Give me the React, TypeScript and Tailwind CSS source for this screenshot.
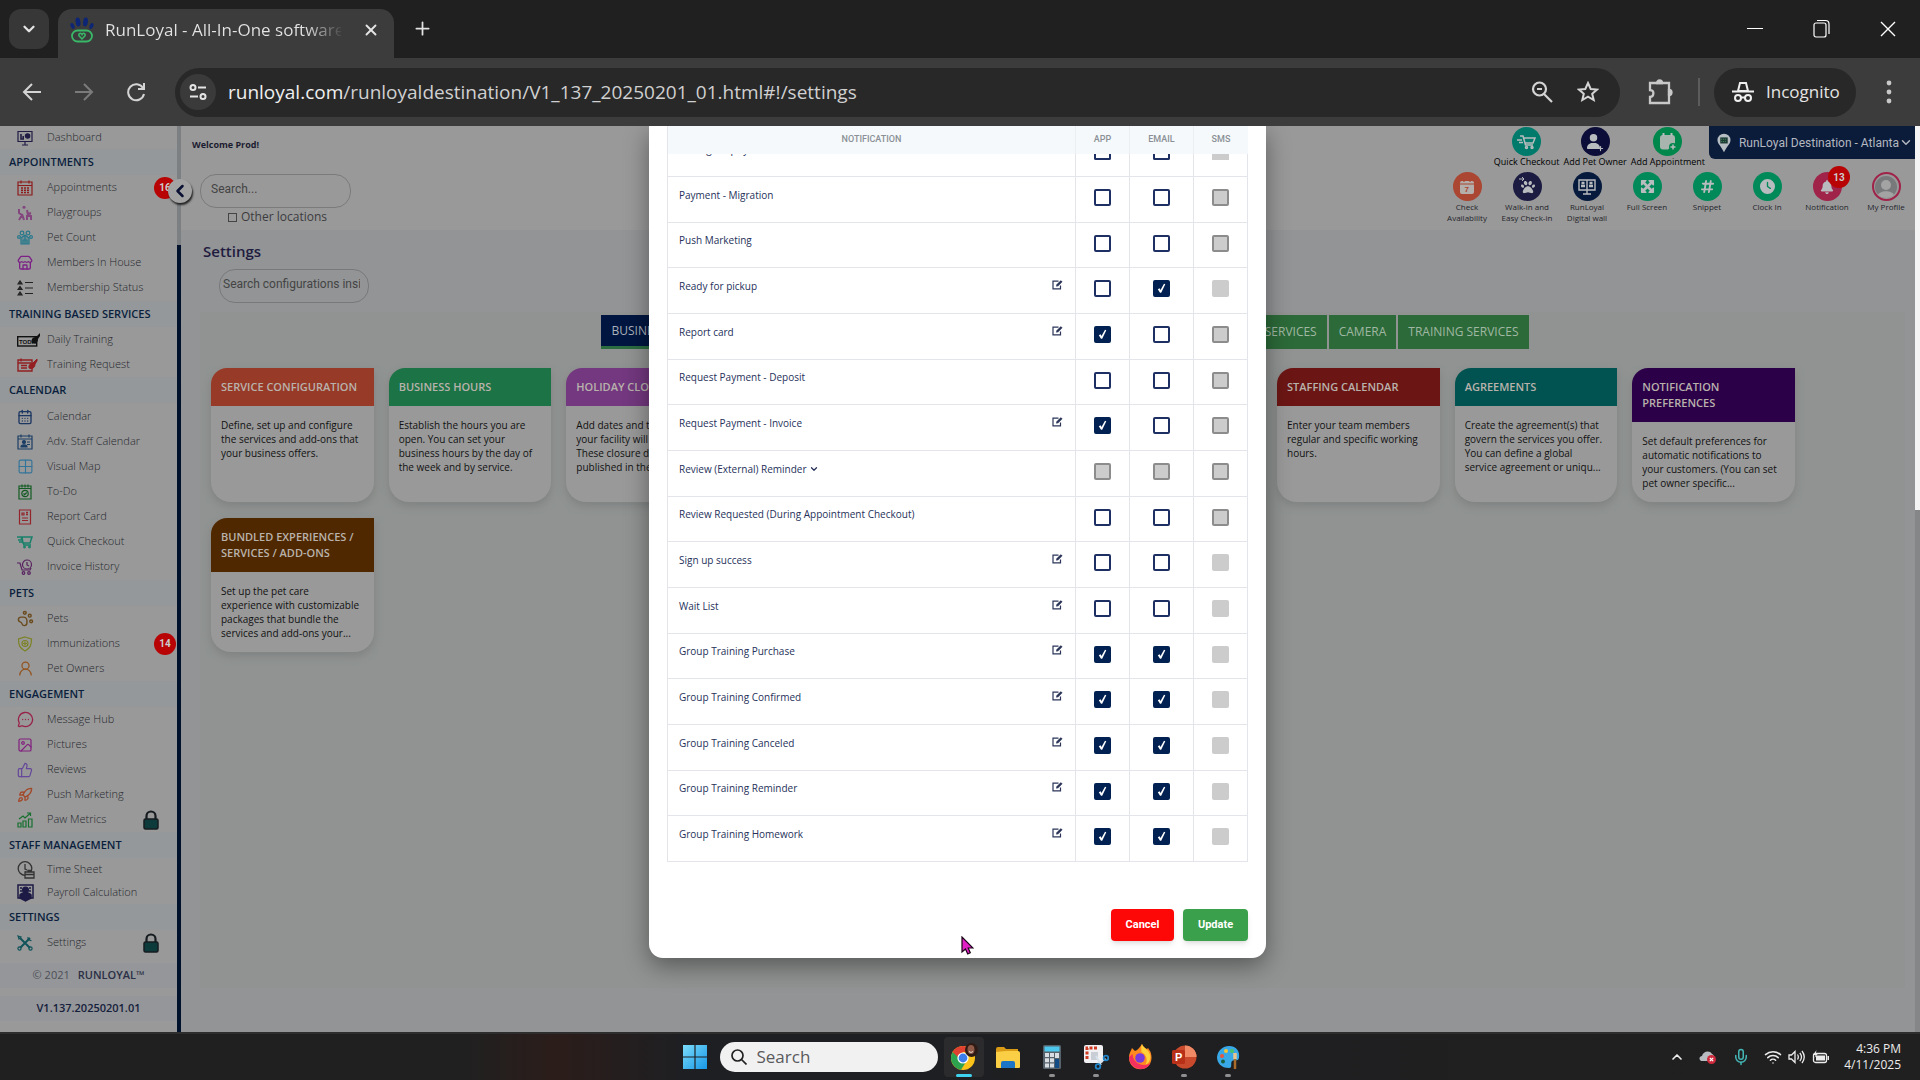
import { useState, type ReactNode } from 'react'
import {
  CalendarDays,
  ChevronDown,
  ChevronLeft,
  ChevronUp,
  Grid2X2,
  Image,
  MessageCircleMore,
  Mic,
  PawPrint,
  Plus,
  Rocket,
  Store,
  ThumbsUp,
  UserRound,
  Wifi,
  X,
} from 'lucide-react'
import { FaBell, FaClock, FaHashtag, FaMaximize, FaPaw, FaUser } from 'react-icons/fa6'

const base = { width: 16, height: 16, viewBox: '0 0 16 16', fill: 'none', stroke: 'currentColor', strokeWidth: 1.2 }

const icons: Record<string, ReactNode> = {
  dashboard: (
    <svg {...base} className="text-[#211d45]">
      <path d="M1 1.5h14v10H1zM5 15h6M8 12v3" />
      <path d="M4 4v5h3M6.2 6v3" strokeWidth="1.6" />
      <circle cx="10.6" cy="6" r="2.2" fill="currentColor" />
    </svg>
  ),
  appointments: (
    <svg {...base} className="text-[#8e1b1b]">
      <path d="M1 2h14v13H1zM1 5.5h14M4 .5v3M12 .5v3" />
      <path d="M4 8h8M4 10.2h8M4 12.4h8" strokeWidth="1.5" strokeDasharray="2 1" />
    </svg>
  ),
  playgroups: (
    <svg {...base} className="text-[#83467f]">
      <circle cx="7" cy="2.2" r="1.5" fill="currentColor" stroke="none" />
      <path d="M2 4v4l3 2-3 5M5 9l2 6M10 5l1 5 3 1v4M10 10v5M11 9l3-1" strokeWidth="2" />
    </svg>
  ),
  petCount: (
    <svg {...base} className="text-[#26798c]">
      <circle cx="5" cy="3" r="1.8" />
      <circle cx="11" cy="3" r="1.8" />
      <circle cx="2" cy="7" r="1.4" />
      <circle cx="14" cy="7" r="1.4" />
      <path d="M4 8l4-3 4 3v6H4zM6 14v-4h4v4M8 6v8" fill="#26798c55" />
    </svg>
  ),
  members: <Store size={16} strokeWidth={2} className="text-[#7d2187]" />,
  membership: (
    <svg {...base} className="text-[#222]">
      <path d="M8 2.5h8M8 8h8M8 13.5h8" />
      <path d="M1 4l2-3 2 3zM1 9.5l2-3 2 3zM1 15l2-3 2 3z" fill="#333" />
    </svg>
  ),
  daily: (
    <svg width="24" height="14" viewBox="0 0 24 14">
      <rect x=".7" y="3.7" width="19" height="9.3" fill="none" stroke="#111" strokeWidth="1.4" />
      <text x="2" y="11" fontSize="6" fontWeight="700" fontFamily="Liberation Sans" fill="#111">TODA</text>
      <path d="M15 10a4 4 0 0 1 4-6l4-4v3l-2 3a4 4 0 0 1-6 4z" fill="#111" />
    </svg>
  ),
  request: (
    <svg width="22" height="14" viewBox="0 0 22 14" fill="none" stroke="#931f22">
      <path d="M1 2h14v11H1zM1 5h13M4 .5v3M4 7.5h6M4 10h6" strokeWidth="1.4" />
      <path d="M12 10a4 4 0 0 1 4-5l4-4v2l-2 3a4 4 0 0 1-6 4z" fill="#931f22" />
    </svg>
  ),
  calendar: <CalendarDays size={16} strokeWidth={2} className="text-[#1c3761]" />,
  staffCalendar: (
    <svg {...base} className="text-[#1b3f66]">
      <path d="M1 2h14v13H1zM1 5h14M4 .5v3M12 .5v3" />
      <circle cx="7" cy="8" r="1.5" fill="currentColor" />
      <path d="M4 13c0-3 6-3 6 0zM10 8h3M10 10.5h3" fill="currentColor" />
    </svg>
  ),
  map: <Grid2X2 size={17} strokeWidth={1.6} className="text-[#33749a]" />,
  todo: (
    <svg {...base} className="text-[#135c24]">
      <path d="M2 2h12v13H2zM2 4.5h12M5 .5v3M8 .5v3M11 .5v3" />
      <circle cx="8" cy="9.5" r="3.2" />
      <path d="M6.5 9.5l1.2 1.2 2-2.2" />
    </svg>
  ),
  report: (
    <svg {...base} className="text-[#94252c]">
      <path d="M2.5 1h11v14h-11zM5 9h6M5 11.5h6M5 4h2v2H5z" />
      <path d="M9 3.5h2M9 5.5h2" strokeWidth="1.6" />
    </svg>
  ),
  cart: (
    <svg {...base} className="text-[#188069]">
      <path d="M5 3h10l-2 6H6zM0 3h4l3 8h7M1 6h4M2 8h4" strokeWidth="1.5" />
      <circle cx="7.5" cy="13" r=".8" />
      <circle cx="12.5" cy="13" r=".8" />
    </svg>
  ),
  invoice: (
    <svg {...base} className="text-[#58215f]">
      <circle cx="10" cy="5.5" r="4.5" />
      <path d="M10 3v3l2 1M0 4h3l2 7h8l1-2" />
      <circle cx="6.5" cy="14" r="1.3" />
      <circle cx="12" cy="14" r="1.3" />
    </svg>
  ),
  pets: <PawPrint size={17} strokeWidth={2} className="text-[#6b4a1d]" />,
  shield: (
    <svg {...base} className="text-[#7d8325]">
      <path d="M8 1l6.500 2c0 6-1 9-6.500 12C2.500 12 1.500 9 1.500 3z" />
      <circle cx="8" cy="7.5" r="3" />
      <path d="M8 5.5v4M6 7.5h4" />
    </svg>
  ),
  owners: <UserRound size={17} strokeWidth={1.8} className="text-[#93541f]" />,
  message: <MessageCircleMore size={17} strokeWidth={1.8} className="text-[#98234a]" />,
  pictures: <Image size={16} strokeWidth={1.8} className="text-[#83217f]" />,
  reviews: <ThumbsUp size={16} strokeWidth={1.8} className="text-[#66479b]" />,
  rocket: <Rocket size={16} strokeWidth={2} className="text-[#a3492a]" />,
  metrics: (
    <svg {...base} className="text-[#16702f]">
      <path d="M1 11h3v4H1zM6 9h3v6H6zM11.5 7H15v8h-3.5zM2 7l4-3 2 2 5-4.5M10 1h3.5v3" />
    </svg>
  ),
  time: (
    <svg width="18" height="18" viewBox="0 0 18 18" fill="none" stroke="#333" strokeWidth="1.3">
      <circle cx="8" cy="7.5" r="6.8" />
      <path d="M8 3v5l2 1M8 11H9" />
      <path d="M8 11h9v6H8zM11 11V9.5h3V11M8 13.5h9" fill="#999" />
    </svg>
  ),
  payroll: (
    <svg width="17" height="18" viewBox="0 0 17 18" fill="none" stroke="#1d1a45" strokeWidth="1.5">
      <path d="M1 1h15v13H1zM3 4h2M12 4h2M3 7h2M12 7h2" />
      <circle cx="8.5" cy="6" r="2.8" fill="#1d1a45" />
      <path d="M3 11c2-3 9-3 11 0v3l-5.5 3L3 14z" fill="#1d1a45" />
    </svg>
  ),
  tools: (
    <svg {...base} className="text-[#11545a]">
      <path d="M3 3l10 10M13 3L3 13" strokeWidth="2" />
      <circle cx="2.5" cy="13.5" r="1.6" />
      <circle cx="13.5" cy="13.5" r="1.6" />
      <path d="M1 1l3 1-2 2zM11 2a3 3 0 0 0 3.5 3.5" />
    </svg>
  ),
}

type Item = { label: string; icon: string; badge?: string; locked?: boolean }
type Section = { title: string; items: Item[]; listClass?: string; compact?: boolean }

const sections: Section[] = [
  {
    title: 'APPOINTMENTS',
    listClass: 'pb-px',
    items: [
      { label: 'Appointments', icon: 'appointments', badge: '16' },
      { label: 'Playgroups', icon: 'playgroups' },
      { label: 'Pet Count', icon: 'petCount' },
      { label: 'Members In House', icon: 'members' },
      { label: 'Membership Status', icon: 'membership' },
    ],
  },
  {
    title: 'TRAINING BASED SERVICES',
    items: [
      { label: 'Daily Training', icon: 'daily' },
      { label: 'Training Request', icon: 'request' },
    ],
  },
  {
    title: 'CALENDAR',
    listClass: 'py-px',
    items: [
      { label: 'Calendar', icon: 'calendar' },
      { label: 'Adv. Staff Calendar', icon: 'staffCalendar' },
      { label: 'Visual Map', icon: 'map' },
      { label: 'To-Do', icon: 'todo' },
      { label: 'Report Card', icon: 'report' },
      { label: 'Quick Checkout', icon: 'cart' },
      { label: 'Invoice History', icon: 'invoice' },
    ],
  },
  {
    title: 'PETS',
    items: [
      { label: 'Pets', icon: 'pets' },
      { label: 'Immunizations', icon: 'shield', badge: '14' },
      { label: 'Pet Owners', icon: 'owners' },
    ],
  },
  {
    title: 'ENGAGEMENT',
    items: [
      { label: 'Message Hub', icon: 'message' },
      { label: 'Pictures', icon: 'pictures' },
      { label: 'Reviews', icon: 'reviews' },
      { label: 'Push Marketing', icon: 'rocket' },
      { label: 'Paw Metrics', icon: 'metrics', locked: true },
    ],
  },
  {
    title: 'STAFF MANAGEMENT',
    compact: true,
    items: [
      { label: 'Time Sheet', icon: 'time' },
      { label: 'Payroll Calculation', icon: 'payroll' },
    ],
  },
  { title: 'SETTINGS', items: [{ label: 'Settings', icon: 'tools', locked: true }] },
]

// on = ticked, off = empty, dim = disabled with border, flat = disabled without border
type Box = 'on' | 'off' | 'dim' | 'flat'
type Row = { label: string; edit?: boolean; expand?: boolean; boxes: [Box, Box, Box] }

const rows: Row[] = [
  { label: 'Payment - Migration', boxes: ['off', 'off', 'dim'] },
  { label: 'Push Marketing', boxes: ['off', 'off', 'dim'] },
  { label: 'Ready for pickup', edit: true, boxes: ['off', 'on', 'flat'] },
  { label: 'Report card', edit: true, boxes: ['on', 'off', 'dim'] },
  { label: 'Request Payment - Deposit', boxes: ['off', 'off', 'dim'] },
  { label: 'Request Payment - Invoice', edit: true, boxes: ['on', 'off', 'dim'] },
  { label: 'Review (External) Reminder', expand: true, boxes: ['dim', 'dim', 'dim'] },
  { label: 'Review Requested (During Appointment Checkout)', boxes: ['off', 'off', 'dim'] },
  { label: 'Sign up success', edit: true, boxes: ['off', 'off', 'flat'] },
  { label: 'Wait List', edit: true, boxes: ['off', 'off', 'flat'] },
  { label: 'Group Training Purchase', edit: true, boxes: ['on', 'on', 'flat'] },
  { label: 'Group Training Confirmed', edit: true, boxes: ['on', 'on', 'flat'] },
  { label: 'Group Training Canceled', edit: true, boxes: ['on', 'on', 'flat'] },
  { label: 'Group Training Reminder', edit: true, boxes: ['on', 'on', 'flat'] },
  { label: 'Group Training Homework', edit: true, boxes: ['on', 'on', 'flat'] },
]

const channels = ['APP', 'EMAIL', 'SMS']

const cards = [
  {
    title: 'SERVICE CONFIGURATION',
    color: 'bg-[#973a28]',
    text: 'Define, set up and configure\nthe services and add-ons that\nyour business offers.',
  },
  {
    title: 'BUSINESS HOURS',
    color: 'bg-[#1c7345]',
    text: 'Establish the hours you are\nopen. You can set your\nbusiness hours by the day of\nthe week and by service.',
  },
  {
    title: 'HOLIDAY CLOSURES',
    color: 'bg-[#73387f]',
    text: 'Add dates and times that\nyour facility will be closed.\nThese closure dates will be\npublished in the app.',
  },
  {
    title: 'STAFFING CALENDAR',
    color: 'bg-[#6b1614]',
    position: 'col-start-7',
    text: 'Enter your team members\nregular and specific working\nhours.',
  },
  {
    title: 'AGREEMENTS',
    color: 'bg-[#005350]',
    text: 'Create the agreement(s) that\ngovern the services you offer.\nYou can define a global\nservice agreement or uniqu...',
  },
  {
    title: 'NOTIFICATION PREFERENCES',
    color: 'bg-[#2b0048]',
    text: 'Set default preferences for\nautomatic notifications to\nyour customers. (You can set\npet owner specific...',
  },
  {
    title: 'BUNDLED EXPERIENCES / SERVICES / ADD-ONS',
    color: 'bg-[#4f2800]',
    text: 'Set up the pet care\nexperience with customizable\npackages that bundle the\nservices and add-ons your...',
  },
]

function BrowserBar() {
  return (
    <header className="font-['Open_Sans',sans-serif] text-[#e4e4e4]">
      <div className="flex h-[58px] items-end bg-[#1f201f] pl-[9px]">
        <button aria-label="Search tabs" className="mb-[9px] flex size-10 items-center justify-center rounded-xl bg-[#373737]">
          <ChevronDown size={18} strokeWidth={3} />
        </button>
        <div className="ml-[9px] flex h-[49px] w-[336px] items-center rounded-t-[14px] bg-[#3c3c3c] pr-3.5 pb-2 pl-3">
          <svg width="24" height="26" viewBox="0 0 24 26" fill="none">
            <g fill="#0d2575">
              <ellipse cx="2.5" cy="9" rx="1.8" ry="3" transform="rotate(-25 2.5 9)" />
              <ellipse cx="8" cy="5" rx="2.4" ry="4.5" transform="rotate(-8 8 5)" />
              <ellipse cx="15.5" cy="5" rx="2.4" ry="4.5" transform="rotate(8 15.5 5)" />
              <ellipse cx="21.5" cy="9" rx="1.8" ry="3" transform="rotate(25 21.5 9)" />
            </g>
            <rect x="2" y="13.5" width="20" height="11" rx="5.5" stroke="#39b868" strokeWidth="1.8" />
            <path d="M12 22l-3-3.300c-1-2 2-3.500 3-1.200 1-2.300 4-.8 3 1.200z" stroke="#39b868" strokeWidth="1.5" />
          </svg>
          <span className="ml-[11px] w-[236px] overflow-hidden bg-gradient-to-r from-[#e4e4e4] from-85% to-[#4a4a4a] bg-clip-text text-[17px] whitespace-nowrap text-transparent">
            RunLoyal - All-In-One software
          </span>
          <button aria-label="Close tab" className="ml-auto">
            <X size={18} strokeWidth={2.5} />
          </button>
        </div>
        <button aria-label="New tab" className="mb-[19px] ml-[18px]">
          <Plus size={21} strokeWidth={2} />
        </button>
        <div className="mb-[19px] ml-auto flex items-center gap-[50px] pr-6 text-white">
          <button aria-label="Minimize">
            <svg width="16" height="16" viewBox="0 0 16 16" stroke="currentColor"><path d="M0 7.5h16" /></svg>
          </button>
          <button aria-label="Restore">
            <svg width="17" height="20" viewBox="0 0 17 20" fill="none" stroke="currentColor" strokeWidth="1.2">
              <rect x="1" y="4" width="12" height="14" rx="2" />
              <path d="M4 1.5h8.500c2 0 3.500 1.500 3.500 3.500v10" />
            </svg>
          </button>
          <button aria-label="Close">
            <svg width="16" height="18" viewBox="0 0 16 18" stroke="currentColor" strokeWidth="1.4"><path d="M1 2l14 14M15 2L1 16" /></svg>
          </button>
        </div>
      </div>
      <div className="flex h-[68px] items-center bg-[#3c3c3c] pr-[27px] pl-[22px]">
        <div className="flex w-[153px] gap-8">
          <button aria-label="Back">
            <svg width="20" height="20" viewBox="0 0 20 20" fill="none" stroke="#d4d4d4" strokeWidth="2"><path d="M19 10H2M10 2l-8 8 8 8" /></svg>
          </button>
          <button aria-label="Forward">
            <svg width="20" height="20" viewBox="0 0 20 20" fill="none" stroke="#7b7b7b" strokeWidth="2"><path d="M1 10h17M10 2l8 8-8 8" /></svg>
          </button>
          <button aria-label="Reload">
            <svg width="20" height="20" viewBox="0 0 20 20" fill="none" stroke="#d4d4d4" strokeWidth="2"><path d="M18 12a8 8 0 1 1-1-6M18 1v6h-6" /></svg>
          </button>
        </div>
        <div className="flex h-[49px] flex-1 items-center rounded-full bg-[#282828] pr-[21px] pl-[5px]">
          <button aria-label="Site information" className="flex size-9 items-center justify-center rounded-full bg-[#3a3a3a]">
            <svg width="18" height="18" viewBox="0 0 18 18" fill="none" stroke="#e4e4e4" strokeWidth="2">
              <circle cx="4" cy="4.5" r="2.5" />
              <circle cx="14" cy="13.5" r="2.5" />
              <path d="M9 4.5h8M1 13.5h8" />
            </svg>
          </button>
          <span className="ml-3 flex-1 text-[19px] text-[#d0d0d0]">
            <span className="text-[#efefef]">runloyal.com</span>/runloyaldestination/V1_137_20250201_01.html#!/settings
          </span>
          <button aria-label="Zoom" className="mr-6">
            <svg width="22" height="22" viewBox="0 0 22 22" fill="none" stroke="#d4d4d4" strokeWidth="2.2">
              <circle cx="8.5" cy="8" r="6.5" />
              <path d="M13 13l8 8M6 8h5" />
            </svg>
          </button>
          <button aria-label="Bookmark">
            <svg width="22" height="22" viewBox="0 0 22 22" fill="none" stroke="#d4d4d4" strokeWidth="2">
              <path d="M11 2l2.700 6 6.300.6-4.800 4.200L16.700 19 11 15.700 5.300 19l1.500-6.200L2 8.600 8.300 8z" />
            </svg>
          </button>
        </div>
        <button aria-label="Extensions" className="ml-[27px]">
          <svg width="26" height="26" viewBox="0 0 26 26" fill="none" stroke="#c8c8c8" strokeWidth="2.3">
            <path d="M3 4h19v20H3v-6c4 0 5-7 0-7z" />
            <path d="M10 4a2.500 2.500 0 0 1 5 0zM22 11a2.500 2.500 0 0 1 0 5z" fill="#c8c8c8" />
          </svg>
        </button>
        <div className="mr-3.5 ml-[25px] h-7 w-0.5 bg-[#5c5c5c]" />
        <button className="flex h-[49px] w-[142px] items-center gap-3 rounded-full bg-[#282828] pl-[18px] text-[17px]">
          <svg width="22" height="22" viewBox="0 0 22 22" fill="none" stroke="#efefef" strokeWidth="2">
            <path d="M6 10l2-8h6l2 8zM0 10.5h22" />
            <circle cx="6" cy="17" r="3" />
            <circle cx="16" cy="17" r="3" />
            <path d="M9 16.5h4" />
          </svg>
          Incognito
        </button>
        <button aria-label="Menu" className="ml-[29px]">
          <svg width="8" height="26" viewBox="0 0 8 26" fill="#c8c8c8">
            <circle cx="4" cy="4" r="2.4" />
            <circle cx="4" cy="13" r="2.4" />
            <circle cx="4" cy="22" r="2.4" />
          </svg>
        </button>
      </div>
    </header>
  )
}

function Sidebar() {
  return (
    <>
      <nav className="w-[177px] shrink-0 bg-[#999]">
        <a href="#dashboard" className="flex h-[23px] items-center text-[11px] font-light text-[#26282e]">
          <span className="ml-[17px] flex w-[30px]">{icons.dashboard}</span>
          Dashboard
        </a>
        {sections.map((section) => (
          <div key={section.title}>
            <h2 className="flex h-[26px] items-center bg-[#94989b] pl-[9px] text-[11px] font-semibold text-[#0b1f3d]">{section.title}</h2>
            <div className={section.listClass}>
              {section.items.map((item) => (
                <a
                  key={item.label}
                  href="#settings"
                  className={`relative flex items-center text-[11px] font-light whitespace-nowrap text-[#26282e] ${section.compact ? 'h-[23px]' : 'h-[25px]'}`}
                >
                  <span className="ml-[17px] flex w-[30px] shrink-0">{icons[item.icon]}</span>
                  {item.label}
                  {item.badge && (
                    <span className="absolute right-px flex size-[22px] items-center justify-center rounded-full bg-[#b80404] font-['Roboto',sans-serif] text-[10px] font-bold text-[#ccc]">
                      {item.badge}
                    </span>
                  )}
                  {item.locked && (
                    <span className="absolute right-[18px]">
                      <svg width="16" height="20" viewBox="0 0 16 20">
                        <path d="M3.500 10V6a4.500 4.500 0 0 1 9 0v4" fill="none" stroke="#161c20" strokeWidth="2.2" />
                        <rect x="1" y="9" width="14" height="10" rx="1.5" fill="#0d3b3c" stroke="#161c20" strokeWidth="1.5" />
                      </svg>
                    </span>
                  )}
                </a>
              ))}
            </div>
          </div>
        ))}
        <p className="mt-2 flex h-[25px] items-center justify-center gap-2 bg-[#949699] text-[11px] text-[#4d5058]">
          <span>© 2021</span>
          <span className="font-semibold text-[#2b2f45]">RUNLOYAL™</span>
        </p>
        <p className="mt-2 mb-2 flex h-[25px] items-center justify-center bg-[#949699] text-[11px] font-semibold text-[#15203b]">
          V1.137.20250201.01
        </p>
      </nav>
      <div className="relative flex w-1 shrink-0 flex-col bg-[#00122b]">
        <div className="h-[119px] bg-[#7c8083]" />
        <button
          aria-label="Collapse menu"
          className="absolute top-[53px] -left-[9px] flex size-6 items-center justify-center rounded-full bg-[#a3a3a3] text-[#0a1033] shadow-[1px_2px_2px_#222]"
        >
          <ChevronLeft size={20} strokeWidth={3} />
        </button>
      </div>
    </>
  )
}

function RoundIcon({ color, children }: { color: string; children: ReactNode }) {
  return <span className={`flex size-[29px] items-center justify-center rounded-full text-[#b9bcbe] ${color}`}>{children}</span>
}

function TopBar() {
  return (
    <div className="flex h-[104px] justify-between bg-[#999]">
      <div>
        <p className="pt-[11px] pl-[11px] text-[9px] leading-4 font-bold text-[#1c1c30]">Welcome Prod!</p>
        <input
          aria-label="Search"
          placeholder="Search..."
          className="mt-[21px] ml-[19px] block h-[34px] w-[151px] rounded-2xl border border-[#7b7b7b] px-2.5 pb-1 font-['Roboto',sans-serif] text-[12px] placeholder:text-[#444]"
        />
        <label className="ml-[47px] flex items-center gap-1 text-[12px] leading-[18px] text-[#3c3c40]">
          <input type="checkbox" className="size-[9px] appearance-none border border-[#444]" />
          Other locations
        </label>
      </div>
      <div className="flex flex-col items-end">
        <div className="flex items-start">
          <div className="mr-1 flex gap-1 text-[9px] leading-3 text-black">
            <a href="#checkout" className="flex flex-col items-center pt-px">
              <RoundIcon color="bg-[#007b6b]">
                <svg width="19" height="16" viewBox="0 0 19 16" fill="none" stroke="currentColor" strokeWidth="1.5">
                  <path d="M3 2h3l2.500 9H16M7 4h11l-2 5H8M0 6h5M2 8.500h4" />
                  <circle cx="9.5" cy="13.5" r="1" />
                  <circle cx="15" cy="13.5" r="1" />
                </svg>
              </RoundIcon>
              Quick Checkout
            </a>
            <a href="#owner" className="flex flex-col items-center pt-px">
              <RoundIcon color="bg-[#0c0d38]">
                <FaUser size={15} />
                <Plus size={7} strokeWidth={4} className="mb-1 -ml-1 self-end" />
              </RoundIcon>
              Add Pet Owner
            </a>
            <a href="#appointment" className="flex flex-col items-center pt-px">
              <RoundIcon color="bg-[#00874c]">
                <svg width="20" height="20" viewBox="0 0 20 20" fill="none" stroke="currentColor" strokeWidth="1.5">
                  <path d="M10 17.5H5a3 3 0 0 1-3-3V6a3 3 0 0 1 3-3h9a3 3 0 0 1 3 3v6" fill="#a7b5ae" stroke="none" />
                  <path d="M5.5 1v3M13.5 1v3" strokeWidth="2" />
                  <circle cx="15" cy="15" r="4" fill="#00874c" stroke="none" />
                  <path d="M15 12.5v5M12.5 15h5" />
                </svg>
              </RoundIcon>
              Add Appointment
            </a>
          </div>
          <button className="flex h-[33px] w-[206px] items-center rounded-bl-md bg-[#0b1b3a] pl-2 font-['Roboto',sans-serif] text-[12px] whitespace-nowrap text-[#b4b8c0]">
            <svg width="15" height="20" viewBox="0 0 15 20" className="mr-2">
              <path d="M7.500 20C5 14 .5 11 .5 7a7 7 0 0 1 14 0c0 4-4.500 7-7 13z" fill="#b5bcc2" />
              <rect x="3.5" y="4" width="8" height="6.5" fill="#1c3a35" />
              <path d="M4.5 6h6M4.5 8.500h6" stroke="#4d9161" strokeDasharray="1 1" />
            </svg>
            RunLoyal Destination - Atlanta
            <ChevronDown size={15} strokeWidth={2.5} className="mr-0.5 ml-auto" />
          </button>
        </div>
        <div className="mt-1 flex text-center text-[8px] leading-[11px] text-[#24252b]">
          <a href="#availability" className="flex w-[60px] flex-col items-center">
            <RoundIcon color="bg-[#aa4631]">
              <svg width="14" height="16" viewBox="0 0 14 16">
                <path d="M2 2h10a2 2 0 0 1 2 2v9a2 2 0 0 1-2 2H2a2 2 0 0 1-2-2V4a2 2 0 0 1 2-2z" fill="#b5afac" />
                <path d="M4 0v3M10 0v3M0 5h14" stroke="#aa4631" strokeWidth="1.2" />
                <text x="4.5" y="13" fontSize="8" fontWeight="700" fontFamily="Liberation Sans" fill="#aa4631">7</text>
              </svg>
            </RoundIcon>
            <span>Check<br />Availability</span>
          </a>
          <a href="#walkin" className="flex w-[60px] flex-col items-center whitespace-nowrap">
            <RoundIcon color="bg-[#1c1c42]">
              <svg width="6" height="6" viewBox="0 0 6 6" fill="none" stroke="currentColor" className="mt-1 -mr-1 self-start">
                <path d="M0 3h5M3 1l2 2-2 2" />
              </svg>
              <FaPaw size={14} />
            </RoundIcon>
            <span>Walk-in and<br />Easy Check-in</span>
          </a>
          <a href="#wall" className="flex w-[60px] flex-col items-center">
            <RoundIcon color="bg-[#061a3d]">
              <svg width="18" height="16" viewBox="0 0 18 16" fill="none" stroke="currentColor" strokeWidth="1.4">
                <path d="M1 1h16v10H1zM5 15h8M9 11v4M9 1v10" />
                <path d="M3 7h4M11 7h4M3.5 4h3M11.5 4h3" strokeWidth="2.4" />
              </svg>
            </RoundIcon>
            <span>RunLoyal<br />Digital wall</span>
          </a>
          <a href="#full" className="flex w-[60px] flex-col items-center">
            <RoundIcon color="bg-[#008a5a]"><FaMaximize size={15} /></RoundIcon>
            Full Screen
          </a>
          <a href="#snippet" className="flex w-[60px] flex-col items-center">
            <RoundIcon color="bg-[#008a5a]"><FaHashtag size={15} /></RoundIcon>
            Snippet
          </a>
          <a href="#clock" className="flex w-[60px] flex-col items-center">
            <RoundIcon color="bg-[#008a5a]"><FaClock size={15} /></RoundIcon>
            Clock In
          </a>
          <a href="#notifications" className="relative flex w-[60px] flex-col items-center">
            <RoundIcon color="bg-[#a0234a]"><FaBell size={14} /></RoundIcon>
            Notification
            <span className="absolute -top-1.5 left-[31px] flex size-[22px] items-center justify-center rounded-full bg-[#b80404] font-['Roboto',sans-serif] text-[10px] font-bold text-[#ccc]">
              13
            </span>
          </a>
          <a href="#profile" className="flex w-[58px] flex-col items-center">
            <RoundIcon color="border-2 border-[#a0234a] bg-[#999]">
              <svg width="22" height="22" viewBox="0 0 22 22">
                <circle cx="11" cy="11" r="11" fill="#77797b" />
                <circle cx="11" cy="9" r="5" fill="#a3a3a3" />
                <path d="M3 19c2-5 14-5 16 0-4 4-12 4-16 0z" fill="#a3a3a3" />
              </svg>
            </RoundIcon>
            My Profile
          </a>
        </div>
      </div>
    </div>
  )
}

function SettingsPage() {
  return (
    <main className="flex min-w-0 flex-1 flex-col bg-[#929496]">
      <TopBar />
      <h1 className="mt-[9px] ml-[22px] text-[15px] leading-6 font-semibold text-[#1f1c40]">Settings</h1>
      <input
        aria-label="Search configurations"
        placeholder="Search configurations inside"
        className="mt-1.5 ml-[38px] h-[34px] w-[150px] rounded-2xl border border-[#77797b] pr-2 pb-1 pl-[3px] font-['Roboto',sans-serif] text-[12px] placeholder:text-[#444]"
      />
      <div className="mt-[9px] mr-2.5 mb-11 ml-[19px] flex-1 bg-[#909391]">
        <div className="ml-6 flex h-[37px] justify-center pt-[3px] text-[12px] text-[#a0b8a3]">
          <div className="flex w-[928px] justify-end gap-0.5">
            <button className="mr-auto h-[34px] w-[150px] border-b-[3px] border-[#2b6c40] bg-[#001640] pl-[11px] text-left text-[#aab0bb]">BUSINESS</button>
            <button className="h-[34px] w-[150px] bg-[#2c6a39] pr-2.5 text-right">SERVICES</button>
            <button className="h-[34px] bg-[#2c6a39] px-2.5">CAMERA</button>
            <button className="h-[34px] bg-[#2c6a39] px-2.5">TRAINING SERVICES</button>
          </div>
        </div>
        <div className="mt-[19px] mr-[110px] ml-[11px] grid grid-cols-9 gap-x-[15px] gap-y-4">
          {cards.map((card) => (
            <article
              key={card.title}
              className={`min-h-[134px] overflow-hidden rounded-tl-[16px] rounded-b-[20px] bg-[#999] shadow-[0_4px_8px_#7f8281] ${card.position ?? ''}`}
            >
              <h2 className={`${card.color} py-[11px] pr-1 pl-2.5 text-[11px] leading-4 font-semibold text-[#b9b2ac]`}>{card.title}</h2>
              <p className="pt-3 pb-1.5 pl-2.5 text-[10px] leading-[14px] whitespace-pre-line text-[#111]">{card.text}</p>
            </article>
          ))}
        </div>
      </div>
    </main>
  )
}

const boxStyle: Record<Box, string> = {
  on: 'border-[#002152] bg-[#002152]',
  off: 'border-[#1d2f63] bg-white',
  dim: 'border-[#8c8c8c] bg-[#ccc]',
  flat: 'border-[#ccc] bg-[#ccc]',
}

function Tick({ kind, label }: { kind: Box; label: string }) {
  const [checked, setChecked] = useState(kind === 'on')
  const disabled = kind === 'dim' || kind === 'flat'
  const look = disabled ? kind : checked ? 'on' : 'off'
  return (
    <label className="relative mx-auto flex size-[17px] items-center justify-center">
      <input
        type="checkbox"
        aria-label={label}
        checked={checked}
        disabled={disabled}
        onChange={() => setChecked(!checked)}
        className={`size-[17px] appearance-none rounded-xs border-2 ${boxStyle[look]}`}
      />
      {checked && (
        <svg width="9" height="11" viewBox="0 0 9 11" className="absolute">
          <path d="M.8 6.200l1.800-1 .9 1.800L7 .8l1.300.4L4.200 9.800H3z" fill="#fff" />
        </svg>
      )}
    </label>
  )
}

function NotificationModal() {
  return (
    <div className="absolute inset-0 flex items-start justify-center">
      <section
        role="dialog"
        aria-label="Notification preferences"
        className="mr-[5px] w-[617px] rounded-b-[14px] bg-white px-[18px] pb-[17px] shadow-[0_8px_24px_rgba(0,0,0,0.4)]"
      >
        <table className="w-full table-fixed border-separate border-spacing-0 border-l border-[#e3e5ea] text-[10px] text-[#26315a]">
          <thead>
            <tr className="h-7 bg-[#f5f9fb] font-['Roboto',sans-serif] text-[9px] text-[#8a9096]">
              <th className="font-medium">NOTIFICATION</th>
              <th className="w-[54px] border-l border-[#eceef2] font-medium">APP</th>
              <th className="w-[64px] border-l border-[#eceef2] font-medium">EMAIL</th>
              <th className="w-[55px] border-l border-[#eceef2] font-medium">SMS</th>
            </tr>
          </thead>
          <tbody>
            {/* row scrolled under the header */}
            <tr>
              <td className="border-b border-[#e3e5ea] p-0 pl-[11px] align-top">
                <div className="flex h-[22px] items-start overflow-hidden">
                  <span className="-mt-3 leading-[14px]">Package Expiry</span>
                </div>
              </td>
              {channels.map((channel) => (
                <td key={channel} className="border-b border-l border-[#e3e5ea] p-0 align-top last:border-r">
                  <div className="flex h-[22px] items-start justify-center overflow-hidden">
                    <span
                      className={
                        channel === 'SMS'
                          ? 'h-[6px] w-[17px] bg-[#ccc]'
                          : 'h-[6px] w-[17px] rounded-b-xs border-2 border-t-0 border-[#1d2f63]'
                      }
                    />
                  </div>
                </td>
              ))}
            </tr>
            {rows.map((row) => (
              <tr key={row.label} className="h-[46px] nth-[3n]:h-[45px]">
                <td className="border-b border-[#e3e5ea] pt-0 pr-3 pb-2.5 pl-[11px]">
                  <div className="flex items-center justify-between">
                    <span className="flex items-center gap-0.5 leading-[14px]">
                      {row.label}
                      {row.expand && <ChevronDown size={10} strokeWidth={3} />}
                    </span>
                    {row.edit && (
                      <button aria-label={`Edit ${row.label}`} className="pb-0.5">
                        <svg width="11" height="10" viewBox="0 0 11 10" fill="none" stroke="#2b3558">
                          <path d="M6.500 1.200H1v7.600h7.500V5.500" strokeWidth="1.2" />
                          <path d="M4 6.500l.5-2L8.800.3l1.700 1.500-4.400 4.400z" fill="#2b3558" stroke="none" />
                        </svg>
                      </button>
                    )}
                  </div>
                </td>
                {row.boxes.map((kind, i) => (
                  <td key={channels[i]} className="border-b border-l border-[#e3e5ea] p-0 pb-1 last:border-r">
                    <Tick kind={kind} label={`${row.label} ${channels[i]}`} />
                  </td>
                ))}
              </tr>
            ))}
          </tbody>
        </table>
        <div className="mt-[47px] flex justify-end gap-[9px] font-['Roboto',sans-serif] text-[11px] font-bold text-white">
          <button className="h-8 w-[63px] rounded bg-[#fe0807] shadow-md">Cancel</button>
          <button className="h-8 w-[65px] rounded bg-[#3ba04c] shadow-md">Update</button>
        </div>
      </section>
      <svg width="13" height="19" viewBox="0 0 13 19" className="absolute top-[810px] left-[961px]">
        <path d="M1 1v15l3.500-3 2.200 5 2.600-1.200L7.200 12H12z" fill="#e01fc4" stroke="#1a0416" strokeWidth="1.2" />
      </svg>
    </div>
  )
}

const apps = [
  {
    name: 'File Explorer',
    open: false,
    art: (
      <>
        <path d="M1 5a2 2 0 0 1 2-2h6l2 2h12v6H1z" fill="#d99b16" />
        <path d="M1 8l10-1h12a2 2 0 0 1 2 2v14a1 1 0 0 1-1 1H2a1 1 0 0 1-1-1z" fill="#fbcf45" />
        <path d="M6 24v-5a2 2 0 0 1 2-2h10a2 2 0 0 1 2 2v5z" fill="#1b74c5" />
      </>
    ),
  },
  {
    name: 'Calculator',
    open: true,
    art: (
      <>
        <rect x="4" y="1" width="18" height="24" rx="1.5" fill="#56626b" />
        <rect x="5.5" y="2.5" width="15" height="5" fill="#4cc8ef" />
        <path d="M8 9v15M13 9v15" stroke="#d7dde2" strokeWidth="4" strokeDasharray="4 1.2" />
        <path d="M18 9v5" stroke="#d7dde2" strokeWidth="4" />
        <path d="M18 15v9" stroke="#134b86" strokeWidth="4" />
      </>
    ),
  },
  {
    name: 'Snipping Tool',
    open: true,
    art: (
      <>
        <rect x="1" y="1" width="19" height="18" rx="2" fill="#f1f1f3" />
        <path d="M4 15V4h11" fill="none" stroke="#cf3a22" strokeWidth="3" strokeDasharray="3 1.5" />
        <path d="M8 8h7v8H8z" fill="#c9ced6" />
        <path d="M13 12l5 9M23 15l-8 4" stroke="#d6e3ee" strokeWidth="1.8" />
        <circle cx="23" cy="14" r="2.3" fill="none" stroke="#2385c9" strokeWidth="1.8" />
        <circle cx="15" cy="22.5" r="2.3" fill="none" stroke="#2385c9" strokeWidth="1.8" />
      </>
    ),
  },
  {
    name: 'Firefox',
    open: false,
    art: (
      <>
        <path d="M2 14C2 9 4 7 5 4l3 3c3-1 5-4 7-7 1 3 3 4 5 5l1-1c3 4 3.500 6 3.500 10a11 11 0 0 1-22.500 0z" fill="#ff8a1f" />
        <path d="M15 0c1 4 8 6 8.500 13a10 10 0 0 1-5 8c3-6 0-11-4-13 0-3-1-5 .5-8z" fill="#ffd23c" />
        <path d="M2 13c0 8 6 12 11.500 12 5 0 8-2 10-6-6 4-17 2-18-9z" fill="#f2315f" />
        <circle cx="13" cy="14" r="4.8" fill="#7a3bdc" />
      </>
    ),
  },
  {
    name: 'PowerPoint',
    open: true,
    art: (
      <>
        <circle cx="14" cy="13" r="11.5" fill="#c8492b" />
        <path d="M14 1.500A11.500 11.500 0 0 1 25.500 13H14z" fill="#f08a66" />
        <rect x="1" y="6" width="13" height="14" rx="1.5" fill="#b83018" />
        <text x="4" y="17" fontSize="11" fontWeight="700" fontFamily="Liberation Sans" fill="#fff">P</text>
      </>
    ),
  },
  {
    name: 'Paint',
    open: true,
    art: (
      <>
        <path d="M14 2c8 0 11 6 10 12-1 4-5 1-7 3s1 7-3 7C6 24 2 19 2 13 3 6 8 2 14 2z" fill="#39a8e6" />
        <circle cx="7" cy="12" r="2" fill="#e9573d" />
        <circle cx="11" cy="7" r="2" fill="#f4c534" />
        <circle cx="17" cy="7" r="2" fill="#4cc36a" />
        <circle cx="8" cy="17.5" r="2" fill="#1a5f3c" />
        <path d="M20 9v6" stroke="#e9c48d" strokeWidth="3.5" />
        <path d="M20 15v10" stroke="#a86a2b" strokeWidth="2.5" />
      </>
    ),
  },
]

function Taskbar() {
  return (
    <footer className="relative flex h-12 items-center justify-center border-t-2 border-[#2d2d2e] bg-[linear-gradient(90deg,#202021_0%,#202021_24%,#2b1d1a_29%,#1d1f23_36%,#1f1f21_60%,#202020_100%)] pl-2.5 font-['Open_Sans',sans-serif]">
      <div className="flex items-center">
        <button aria-label="Start">
          <svg width="24" height="24" viewBox="0 0 24 24">
            <defs>
              <linearGradient id="win" x1="0" y1="0" x2="1" y2="1">
                <stop offset="0" stopColor="#7bdcfa" />
                <stop offset="1" stopColor="#1797e6" />
              </linearGradient>
            </defs>
            <path d="M0 0h11.400v11.400H0zM12.600 0H24v11.400H12.600zM0 12.600h11.400V24H0zM12.600 12.600H24V24H12.600z" fill="url(#win)" />
          </svg>
        </button>
        <label className="ml-[13px] flex h-[30px] w-[218px] items-center rounded-full bg-[#f1f1f2] pl-[11px]">
          <svg width="16" height="16" viewBox="0 0 16 16" fill="none" stroke="#222" strokeWidth="1.7">
            <circle cx="6.5" cy="6.5" r="5.5" />
            <path d="M10.5 10.5l5 5" />
          </svg>
          <input aria-label="Search Windows" placeholder="Search" className="ml-2.5 w-40 text-[17px] outline-none placeholder:text-[#5a5a5c]" />
        </label>
        <button aria-label="Chrome" className="relative ml-1.5 flex size-10 items-center justify-center rounded bg-[#2b2b2d]">
          <svg width="28" height="28" viewBox="0 0 28 28">
            <circle cx="13" cy="15" r="12" fill="#fbc21a" />
            <path d="M13 15L2.600 9A12 12 0 0 0 11 26.800L16 19z" fill="#2da34f" />
            <path d="M2.600 9A12 12 0 0 1 23.400 9H13l-4 6z" fill="#e0402f" />
            <circle cx="13" cy="15" r="5.6" fill="#fff" />
            <circle cx="13" cy="15" r="4.4" fill="#3b7ded" />
            <ellipse cx="21.5" cy="7" rx="6.5" ry="7" fill="#2e1b16" />
            <ellipse cx="21" cy="6.5" rx="3.5" ry="4.5" fill="#8e5a47" />
            <path d="M19 8.500q2 2 4 0" stroke="#e8d8d0" fill="none" />
          </svg>
          <span className="absolute bottom-0 h-[3px] w-4 rounded-full bg-[#3fd2ee]" />
        </button>
        {apps.map((app) => (
          <button key={app.name} aria-label={app.name} className="relative ml-1 flex size-10 items-center justify-center">
            <svg width="26" height="26" viewBox="0 0 26 26">{app.art}</svg>
            {app.open && <span className="absolute bottom-0 h-[3px] w-1.5 rounded-full bg-[#8f8f90]" />}
          </button>
        ))}
      </div>
      <div className="absolute right-[19px] flex items-center text-[#ececec]">
        <ChevronUp size={16} strokeWidth={2.5} />
        <svg width="18" height="14" viewBox="0 0 18 14" className="ml-3.5">
          <path d="M2 11c-3-2-1-5 1-5 1-5 8-6 10-2 3 1 3 6 0 7z" fill="#b9bcc0" />
          <circle cx="12.5" cy="9.5" r="4.5" fill="#cf2a3c" />
          <path d="M10.8 7.800l3.400 3.400M14.200 7.800l-3.400 3.400" stroke="#fff" strokeWidth="1.2" />
        </svg>
        <Mic size={18} className="ml-[15px] text-[#45b5b5]" />
        <Wifi size={18} className="ml-3.5" />
        <svg width="17" height="14" viewBox="0 0 17 14" fill="none" stroke="currentColor" strokeWidth="1.3" className="ml-1.5">
          <path d="M1 5h2.500L7 1.500v11L3.500 9H1zM9.500 4.500c1 1.500 1 3.500 0 5M11.800 2.800c2 2.500 2 6 0 8.400M14 1c3 4 3 8 0 12" />
        </svg>
        <svg width="18" height="14" viewBox="0 0 18 14" className="ml-[7px]">
          <rect x="1.5" y="3.5" width="13" height="9" rx="2" fill="none" stroke="currentColor" strokeWidth="1.3" />
          <path d="M4 5.500h9v5H4zM15.500 6h1.500v4h-1.500z" fill="currentColor" />
          <path d="M4.500 0L1 5h2.500L2.500 8 6 3.500H3.800z" fill="currentColor" />
        </svg>
        <div className="ml-3.5 text-right text-[12px] leading-4">
          <div>4:36 PM</div>
          <div>4/11/2025</div>
        </div>
      </div>
    </footer>
  )
}

export default function App() {
  return (
    <div className="flex min-h-screen flex-col bg-[#999] font-['Open_Sans',sans-serif]">
      <BrowserBar />
      <div className="relative flex flex-1 overflow-hidden">
        <Sidebar />
        <SettingsPage />
        <div className="w-[5px] shrink-0 bg-[#858688]">
          <div className="h-[384px] bg-[#f4f4f4]" />
        </div>
        <NotificationModal />
      </div>
      <Taskbar />
    </div>
  )
}
